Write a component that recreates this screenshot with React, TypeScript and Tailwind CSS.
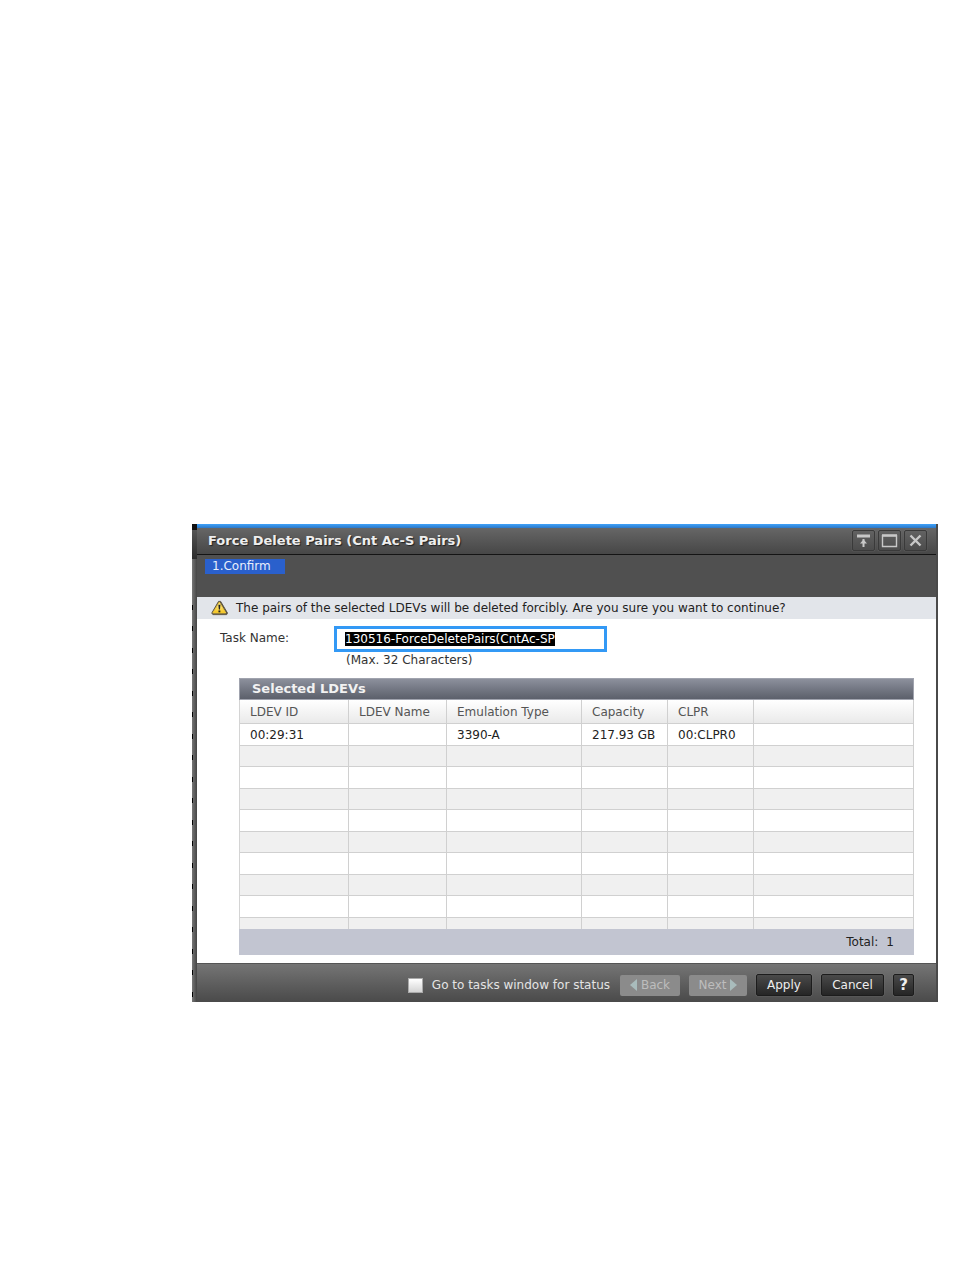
import { useEffect, useRef, useState } from 'react';
import { clsx } from 'clsx';

const columns = ['LDEV ID', 'LDEV Name', 'Emulation Type', 'Capacity', 'CLPR', ''];

const ldevs = [['00:29:31', '', '3390-A', '217.93 GB', '00:CLPR0', '']];

const VISIBLE_ROWS = 10;

function WarningIcon() {
  return (
    <svg width="17" height="16" viewBox="0 0 18 16" aria-hidden="true">
      <defs>
        <linearGradient id="warn" x1="0" y1="0" x2="0" y2="1">
          <stop offset="0" stopColor="#fff7b0" />
          <stop offset="1" stopColor="#f5c21a" />
        </linearGradient>
      </defs>
      <path d="M2 15h14.6l.9-1.6L10.2 1H8L.8 13.4z" fill="#5d5440" stroke="#5d5440" strokeLinejoin="round" />
      <path d="M8.8 1.8 15.6 13.2H2z" fill="url(#warn)" stroke="#f3cb3a" strokeLinejoin="round" />
      <path d="M7.8 4.6h2.2l-.5 5H8.3z" fill="#222" />
      <rect x="7.9" y="10.6" width="2" height="2" fill="#222" />
    </svg>
  );
}

function WindowButton({ label, children }: { label: string; children: React.ReactNode }) {
  return (
    <button
      type="button"
      aria-label={label}
      className="flex h-[21px] w-[23px] items-center justify-center rounded-xs border border-[#3a3a3a] bg-linear-to-b from-[#626262] to-[#4c4c4c] shadow-[0_0_1px_#888]"
    >
      <svg width="17" height="15" viewBox="0 0 17 15" fill="none" stroke="#c8c8c8" aria-hidden="true">
        {children}
      </svg>
    </button>
  );
}

function TitleBar() {
  return (
    <header className="flex h-[27px] items-start justify-between border-b border-[#141414] bg-linear-to-b from-[#666] to-[#474747] pt-[2px] pr-[9px] pl-[11px]">
      <h1 className="text-[13px] leading-[22px] font-bold text-[#eee] [text-shadow:1px_1px_1px_#222]">
        Force Delete Pairs (Cnt Ac-S Pairs)
      </h1>
      <div className="flex gap-[3px]">
        <WindowButton label="Roll up">
          <path d="M2 3h13" strokeWidth="3" />
          <path d="M8.5 14V6" strokeWidth="2" />
          <path d="M5 10.5 8.5 6.5l3.5 4z" fill="#c8c8c8" stroke="none" />
        </WindowButton>
        <WindowButton label="Maximize">
          <path d="M1.5 2v11.5h14V2" strokeWidth="1.4" />
          <path d="M1 2.5h15" strokeWidth="2.6" />
        </WindowButton>
        <WindowButton label="Close">
          <path d="M3.5 2.5l10 10M13.5 2.5l-10 10" strokeWidth="2.4" />
        </WindowButton>
      </div>
    </header>
  );
}

function LdevTable() {
  const rows = Array.from({ length: VISIBLE_ROWS }, (_, i) => ldevs[i] ?? columns.map(() => ''));

  return (
    <section>
      <h2 className="h-[22px] border border-[#a0a3ae] bg-linear-to-b from-[#8c909c] to-[#5c606b] pl-3 text-[13px] leading-5 font-bold text-[#f2f2f2]">
        Selected LDEVs
      </h2>
      <div className="h-[229px] overflow-hidden">
        <table className="w-full table-fixed border-separate border-spacing-0 border-l border-[#d4d4d4]">
          <colgroup>
            <col className="w-[109px]" />
            <col className="w-[98px]" />
            <col className="w-[135px]" />
            <col className="w-[86px]" />
            <col className="w-[86px]" />
            <col />
          </colgroup>
          <thead>
            <tr className="h-6 bg-linear-to-b from-white to-[#e9e9e9]">
              {columns.map((name, i) => (
                <th key={i} className="border-r border-b border-[#d0d0d0] p-0 pl-[10px] text-left font-normal text-[#555]">
                  {name}
                </th>
              ))}
            </tr>
          </thead>
          <tbody>
            {rows.map((row, i) => (
              <tr key={i} className={clsx(i % 2 ? 'h-[21px] bg-[#f0f0f0]' : 'h-[22px] bg-white')}>
                {row.map((cell, j) => (
                  <td key={j} className="border-r border-b border-[#d0d0d0] p-0 pl-[10px] text-[#222]">
                    {cell}
                  </td>
                ))}
              </tr>
            ))}
          </tbody>
        </table>
      </div>
      <div className="flex h-[26px] items-center justify-end gap-2 bg-[#c2c5d1] pr-5 text-[#222]">
        <span>Total:</span>
        <span>1</span>
      </div>
    </section>
  );
}

const darkButton =
  'h-[22px] rounded-xs border border-[#1c1c1c] bg-linear-to-b from-[#4a4a4a] to-[#262626] text-center text-[#eee] shadow-[0_0_1px_#999]';
const disabledButton =
  'flex h-[21px] items-center justify-center gap-1 rounded-xs bg-[#8b8b8b] text-[#bdbdbd]';

function Footer() {
  const [goToTasks, setGoToTasks] = useState(false);

  return (
    <footer className="flex h-[39px] items-center justify-end border-t border-[#555] bg-linear-to-b from-[#757575] to-[#4a4a4a] pt-1 pr-[22px]">
      <label className="mr-[10px] flex items-center gap-[9px] text-[#e4e4e4]">
        <input
          type="checkbox"
          checked={goToTasks}
          onChange={(e) => setGoToTasks(e.target.checked)}
          className="size-[15px] appearance-none border border-[#aaa] bg-linear-to-b from-white to-[#d4d4d4] checked:to-[#3399ff]"
        />
        Go to tasks window for status
      </label>
      <div className="flex items-center gap-[9px]">
        <button type="button" disabled className={clsx(disabledButton, 'w-[60px]')}>
          <svg width="7" height="12" viewBox="0 0 7 12" fill="#a9bcbc" aria-hidden="true">
            <path d="M7 0v12L0 6z" />
          </svg>
          Back
        </button>
        <button type="button" disabled className={clsx(disabledButton, 'w-[58px]')}>
          Next
          <svg width="7" height="12" viewBox="0 0 7 12" fill="#a9bcbc" aria-hidden="true">
            <path d="M0 0v12l7-6z" />
          </svg>
        </button>
        <button type="button" className={clsx(darkButton, 'w-[56px]')}>Apply</button>
        <button type="button" className={clsx(darkButton, 'w-[63px]')}>Cancel</button>
        <button type="button" aria-label="Help" className={clsx(darkButton, 'w-[21px] text-[15px] leading-5 font-bold')}>?</button>
      </div>
    </footer>
  );
}

function LeftEdge() {
  return (
    <div className="flex w-[5px] shrink-0 flex-col bg-linear-to-r from-[#777] to-[#454545]">
      <div className="h-[6px] bg-[#111]" />
      <div className="h-[29px] bg-linear-to-b from-[#555] to-[#2c2c2c]" />
      <div className="h-[46px]" />
      <div className="w-px grow bg-[repeating-linear-gradient(to_bottom,#000_0_5px,transparent_5px_21px,#000_21px_26px,transparent_26px_43px)]" />
    </div>
  );
}

export default function App() {
  const [taskName, setTaskName] = useState('130516-ForceDeletePairs(CntAc-SP');
  const taskInput = useRef<HTMLInputElement>(null);

  // name is preselected so the user can type over it
  useEffect(() => {
    taskInput.current?.focus();
    taskInput.current?.select();
  }, []);

  return (
    <main className="min-h-screen bg-white pt-[524px] pr-4 pb-12 pl-48 font-['DejaVu_Sans',sans-serif] text-[12px] leading-4">
      <div className="flex border-r-2 border-[#4a4a4a] bg-white">
        <LeftEdge />
        <div className="min-w-0 grow">
          <div className="h-1 bg-linear-to-b from-[#3fa2fa] to-[#2b78c8]" />
          <TitleBar />
          <nav className="h-[42px] bg-[#505050] px-2 pt-1">
            <ol>
              <li className="h-[15px] w-20 bg-[#2a60cc] pl-[7px] leading-[15px] text-[#e8eefc]">1.Confirm</li>
            </ol>
          </nav>
          <p className="flex h-[22px] items-center gap-2 bg-[#e2e5ea] pl-[14px] whitespace-nowrap text-[#222]">
            <WarningIcon />
            The pairs of the selected LDEVs will be deleted forcibly. Are you sure you want to continue?
          </p>

          <div className="flex pt-[7px] pl-[23px]">
            <label htmlFor="task-name" className="w-[114px] pt-1 text-[#333]">
              Task Name:
            </label>
            <div>
              <input
                id="task-name"
                ref={taskInput}
                value={taskName}
                maxLength={32}
                onChange={(e) => setTaskName(e.target.value)}
                className="block h-[26px] w-[273px] border-3 border-[#3399f5] bg-white px-2 outline-none selection:bg-black selection:text-white"
              />
              <p className="pl-3 text-[#333]">(Max. 32 Characters)</p>
            </div>
          </div>

          <div className="pt-[10px] pr-[22px] pb-2 pl-[42px]">
            <LdevTable />
          </div>
          <Footer />
        </div>
      </div>
    </main>
  );
}
